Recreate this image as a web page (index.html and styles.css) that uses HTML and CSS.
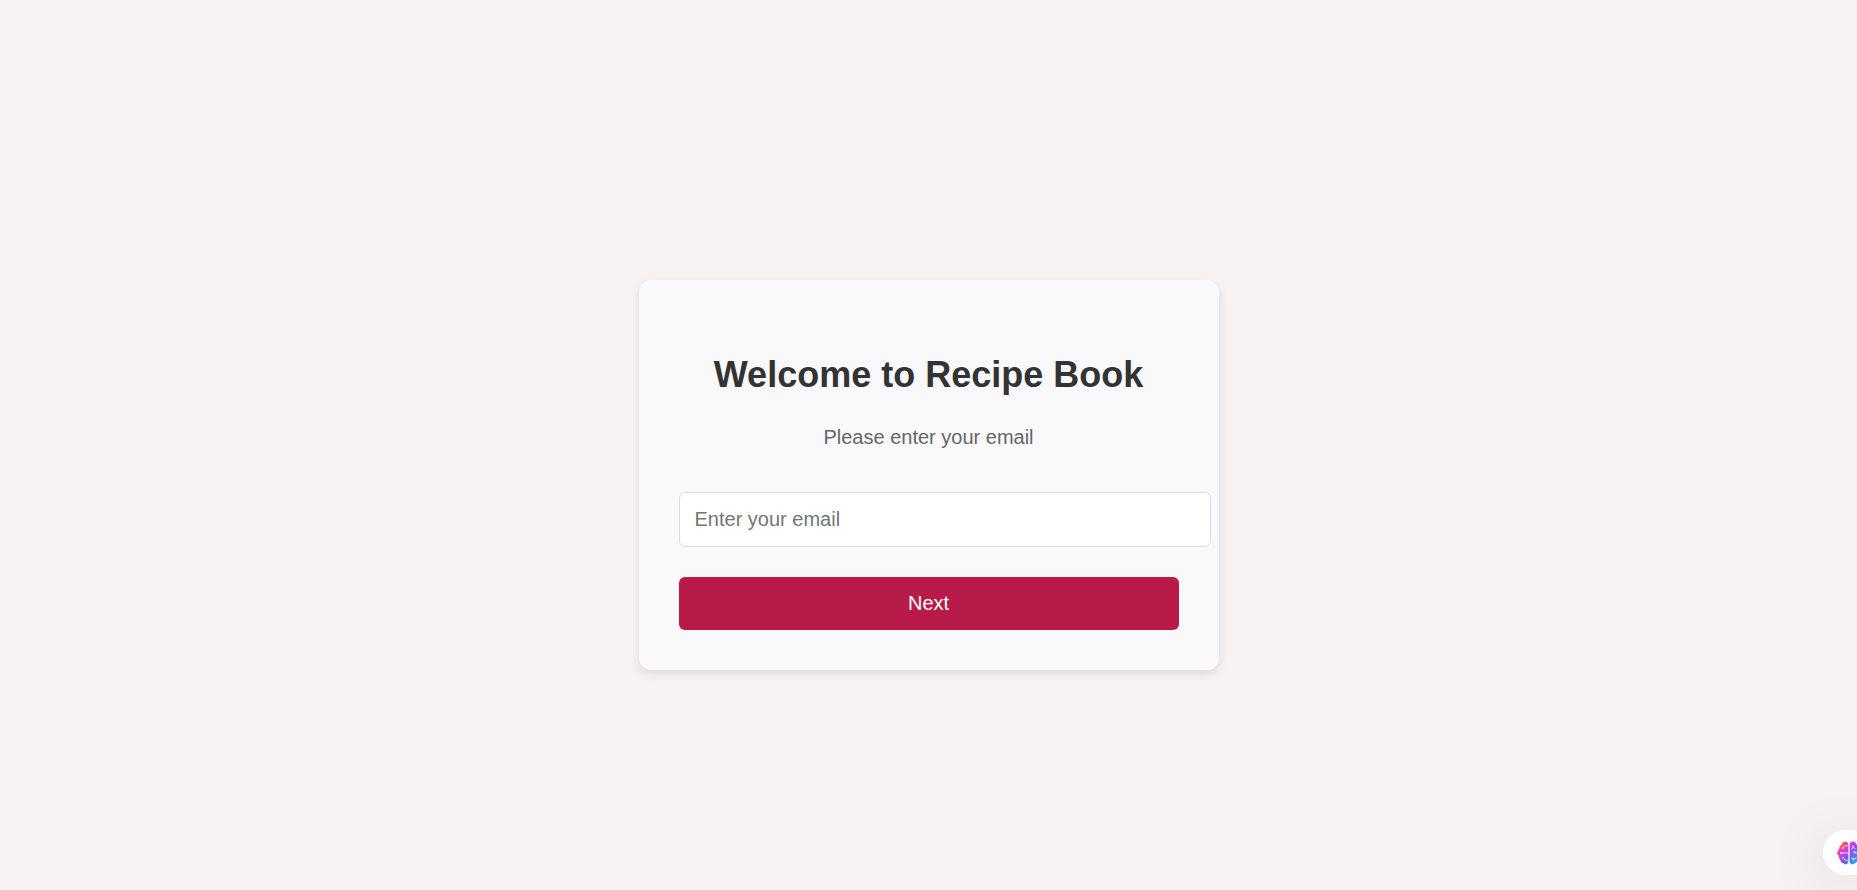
FILE: index.html
```html
<!DOCTYPE html>
<html lang="en">
<head>
<meta charset="utf-8">
<meta name="viewport" content="width=device-width, initial-scale=1">
<title>Recipe Book</title>
<link rel="stylesheet" href="styles.css">
</head>
<body>
<main class="page">
  <form class="card">
    <h1 class="title">Welcome to Recipe Book</h1>
    <label class="prompt" for="email">Please enter your email</label>
    <input class="email" id="email" type="email" placeholder="Enter your email">
    <button class="next" type="submit">Next</button>
  </form>
</main>
<button class="assistant" type="button" aria-label="Open assistant">
  <svg class="brain" viewBox="0 0 24 24" aria-hidden="true">
    <defs>
      <linearGradient id="tint" gradientUnits="userSpaceOnUse" x1="3" y1="3" x2="21" y2="21">
        <stop offset="0" stop-color="#f7941e"/>
        <stop offset="0.17" stop-color="#f83ca0"/>
        <stop offset="0.32" stop-color="#d83fdc"/>
        <stop offset="0.52" stop-color="#8a50f2"/>
        <stop offset="0.75" stop-color="#4c78fa"/>
        <stop offset="1" stop-color="#20b4fc"/>
      </linearGradient>
    </defs>
    <g fill="url(#tint)">
      <path d="M11.4 3.200C10.800 1.200 9.400.4 7.800.6 6 .8 4.900 2.200 4.600 3.500 3 4.200 2.200 5.600 2.400 7.300 1.500 8.100 1.300 8.900 1.500 9.700.3 10.600 0 11.500 .3 12.600.5 13.600 1.200 14.300 1.800 14.700 1.600 16.300 2.100 17.800 3.400 18.900 3.700 20.600 4.700 22 6.200 22.300 7 23.500 8.500 23.700 9.700 23 10.800 22.400 11.400 21.500 11.400 20.200Z"/>
      <path d="M12.600 3.200C13.200 1.200 14.600.4 16.200.6 18 .8 19.100 2.200 19.400 3.500 21 4.200 21.800 5.600 21.600 7.300 22.500 8.100 22.700 8.900 22.500 9.700 23.700 10.600 24 11.500 23.700 12.600 23.500 13.600 22.800 14.300 22.200 14.700 22.400 16.300 21.900 17.800 20.600 18.900 20.300 20.600 19.300 22 17.800 22.300 17 23.500 15.500 23.700 14.300 23 13.200 22.400 12.600 21.500 12.600 20.200Z"/>
    </g>
    <g fill="none" stroke="#fff" stroke-width="0.9" stroke-linecap="round" stroke-opacity="0.85">
      <path d="M11.400 4.500H9.500Q7.500 4.700 6.500 6.500M4 12H11.400M11.400 19.500H9.500Q7.500 19.300 6.500 17.500"/>
      <path d="M16 4.800V6.500L14.500 8M16 6.500 18 7.500M16 11H18L20 12M18 11V12.500M14.500 17 16.500 18 19 17M16.500 18V19.500"/>
    </g>
    <g fill="#fff" fill-opacity="0.9">
      <circle cx="6.200" cy="6.900" r="0.900"/>
      <circle cx="4" cy="12" r="0.900"/>
      <circle cx="6.200" cy="17.100" r="0.900"/>
    </g>
  </svg>
</button>
</body>
</html>
```
FILE: styles.css
```css
body {
  margin: 0;
  background: #f8f1f1;
  font-family: Arial, "Liberation Sans", sans-serif;
}

.page {
  display: flex;
  justify-content: center;
  align-items: center;
  box-sizing: border-box;
  min-height: 100vh;
  padding-top: 60px;
}

.card {
  display: flex;
  flex-direction: column;
  width: 500px;
  padding: 40px;
  border-radius: 12px;
  background: #f9f9fb;
  box-shadow: 0 4px 10px rgba(0, 0, 0, 0.1);
  text-align: center;
}

.title {
  margin: 34px 0 31px;
  color: #333;
  font-size: 36px;
  line-height: 41px;
}

.prompt {
  margin-bottom: 43px;
  color: #666;
  font-size: 20px;
  line-height: 23px;
}

.email {
  width: 100%;
  margin: 0 0 30px;
  padding: 15px;
  border: 1px solid #ddd;
  border-radius: 6px;
  background: #fff;
  font-family: inherit;
  font-size: 20px;
  line-height: 23px;
}

.email::placeholder {
  color: #757575;
}

.next {
  padding: 15px;
  border: 0;
  border-radius: 6px;
  background: #b81b48;
  color: #fff;
  font-family: inherit;
  font-size: 20px;
  line-height: 23px;
  cursor: pointer;
}

.assistant {
  position: fixed;
  right: 0;
  bottom: 15px;
  display: flex;
  align-items: center;
  width: 34px;
  height: 45px;
  padding: 0 0 0 14px;
  border: 0;
  border-radius: 23px 0 0 23px;
  background: #fff;
  box-shadow: 0 8px 60px rgba(0, 0, 0, 0.14);
  overflow: hidden;
  cursor: pointer;
}

.brain {
  flex: none;
  width: 24px;
  height: 24px;
}
```
